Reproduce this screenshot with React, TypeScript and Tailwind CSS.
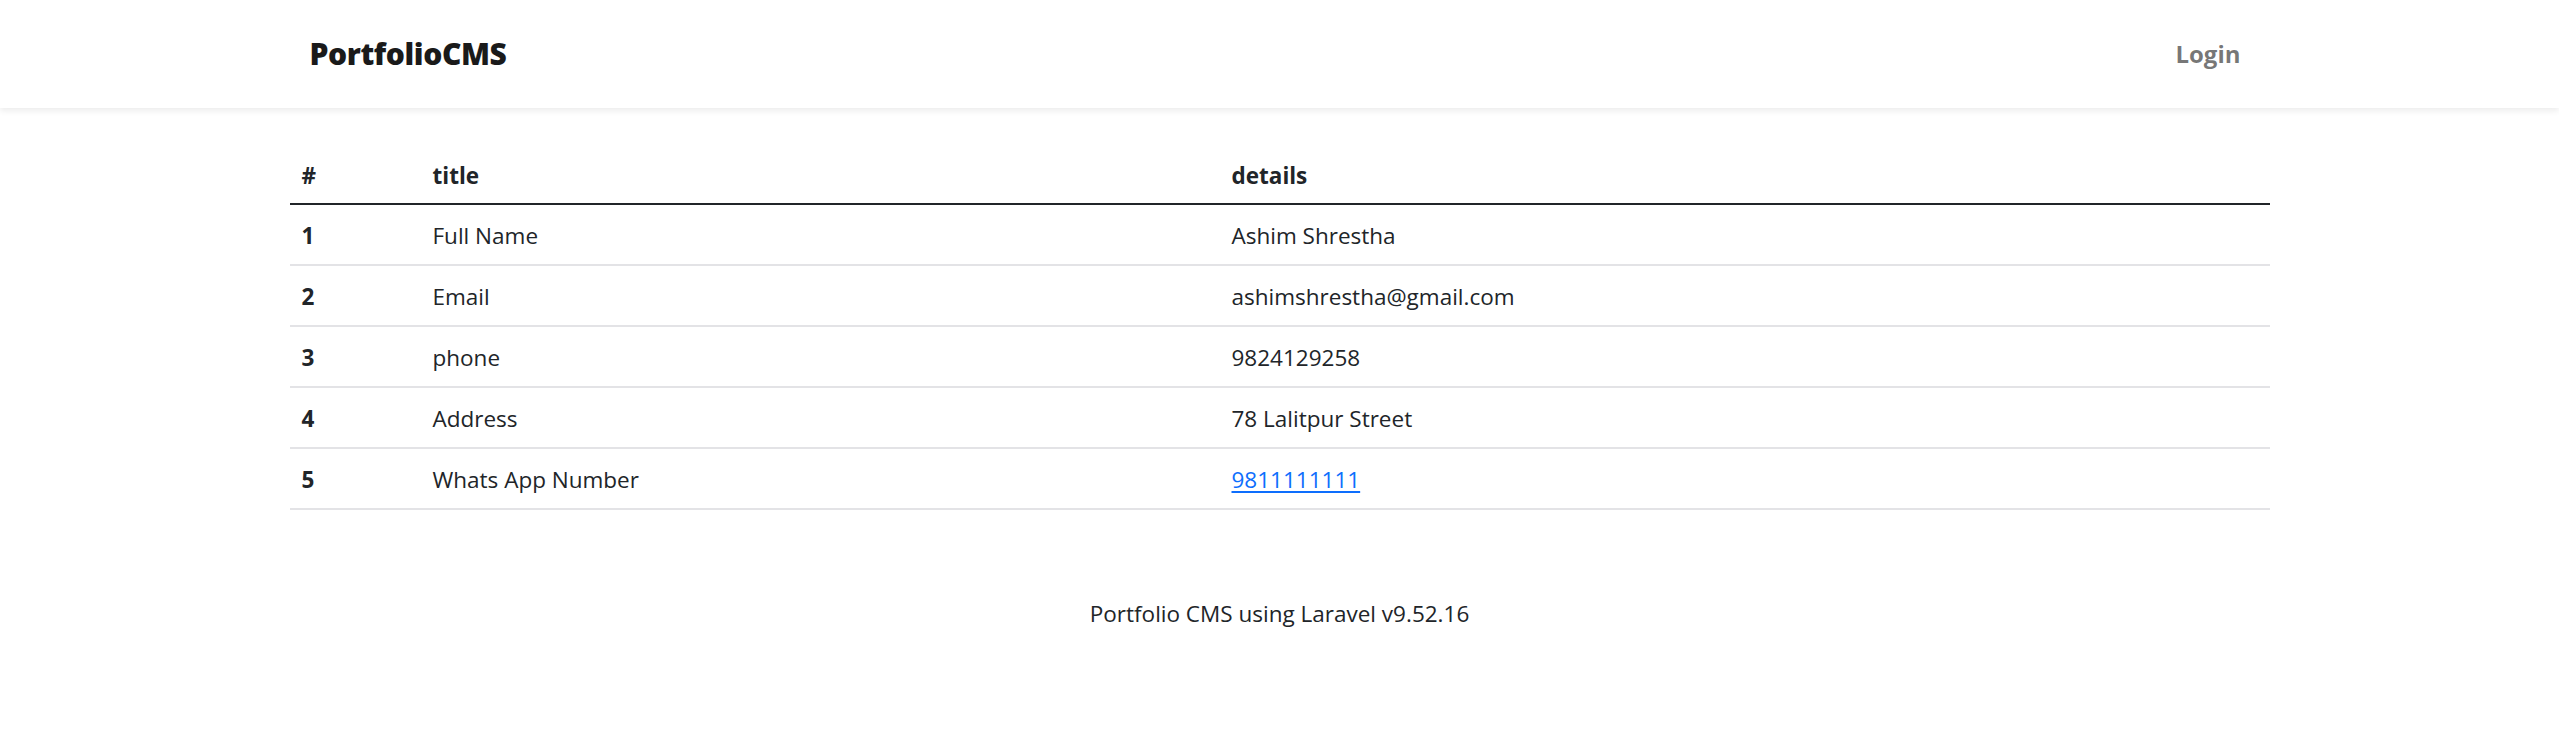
import React from "react";

const rows = [
  { id: 1, title: "Full Name", details: "Ashim Shrestha" },
  { id: 2, title: "Email", details: "ashimshrestha@gmail.com" },
  { id: 3, title: "phone", details: "9824129258" },
  { id: 4, title: "Address", details: "78 Lalitpur Street" },
  { id: 5, title: "Whats App Number", details: "9811111111", link: true },
];

export default function App() {
  return (
    <div
      className="min-h-[730px] bg-white text-[#212529]"
      style={{ fontFamily: '"Open Sans", "Noto Sans", sans-serif' }}
    >
      <nav className="h-[108px] bg-white shadow-[0_3px_6px_rgba(0,0,0,0.075)]">
        <div className="mx-auto flex h-full w-[1980px] items-center justify-between">
          <a className="pl-[20px] text-[30px] font-extrabold leading-none tracking-[-0.4px] text-[#1a1a1a]">
            PortfolioCMS
          </a>
          <a className="pr-[29px] text-[24px] font-bold leading-none text-[rgba(0,0,0,0.55)]">
            Login
          </a>
        </div>
      </nav>

      <main className="mx-auto mt-[36px] w-[1980px]">
        <table className="w-full table-fixed border-collapse text-left text-[22.5px] leading-[36px]">
          <colgroup>
            <col className="w-[131px]" />
            <col className="w-[799px]" />
            <col />
          </colgroup>
          <thead>
            <tr>
              <th className="border-b-2 border-[#212529] px-[12px] pt-[14px] pb-[9px] font-bold">#</th>
              <th className="border-b-2 border-[#212529] px-[12px] pt-[14px] pb-[9px] font-bold">title</th>
              <th className="border-b-2 border-[#212529] px-[12px] pt-[14px] pb-[9px] font-bold">details</th>
            </tr>
          </thead>
          <tbody>
            {rows.map((r) => (
              <tr key={r.id}>
                <th className="border-b-2 border-[#e3e3e6] px-[12px] pt-[13px] pb-[10px] font-bold">{r.id}</th>
                <td className="border-b-2 border-[#e3e3e6] px-[12px] pt-[13px] pb-[10px]">{r.title}</td>
                <td className="border-b-2 border-[#e3e3e6] px-[12px] pt-[13px] pb-[10px]">
                  {r.link ? (
                    <a href="#" className="text-[#0d6efd] underline decoration-2 underline-offset-[3px]">
                      {r.details}
                    </a>
                  ) : (
                    r.details
                  )}
                </td>
              </tr>
            ))}
          </tbody>
        </table>
      </main>

      <footer className="mt-[86px] text-center text-[22.5px] leading-[36px]">
        Portfolio CMS using Laravel v9.52.16
      </footer>
    </div>
  );
}
